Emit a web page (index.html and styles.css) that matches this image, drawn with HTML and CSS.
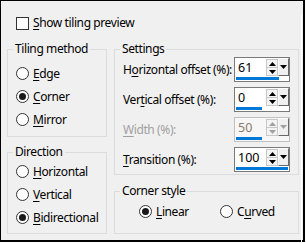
FILE: index.html
```html
<!DOCTYPE html>
<html>
<head>
<meta charset="utf-8">
<link rel="stylesheet" href="styles.css">
</head>
<body>
<div class="win">
  <div class="panel">
    <label class="check"><span class="box"></span><span><u>S</u>how tiling preview</span></label>
    <div class="cols">
      <div class="col left">
        <fieldset class="grp tiling">
          <legend>Tiling method</legend>
          <label class="radio"><span class="dot"></span><span><u>E</u>dge</span></label>
          <label class="radio"><span class="dot on"></span><span><u>C</u>orner</span></label>
          <label class="radio"><span class="dot"></span><span><u>M</u>irror</span></label>
        </fieldset>
        <fieldset class="grp direction">
          <legend>Direction</legend>
          <label class="radio"><span class="dot"></span><span><u>H</u>orizontal</span></label>
          <label class="radio"><span class="dot"></span><span><u>V</u>ertical</span></label>
          <label class="radio"><span class="dot on"></span><span><u>B</u>idirectional</span></label>
        </fieldset>
      </div>
      <div class="col right">
        <fieldset class="grp settings">
          <legend>Settings</legend>
          <div class="row"><span>H<u>o</u>rizontal offset (%):</span>
            <div class="spin"><div class="top"><span class="val">61</span><span class="arrows"><span class="up"><svg width="7" height="4" viewBox="0 0 7 4"><path d="M3.5 0L7 4H0z"/></svg></span><span class="dn"><svg width="7" height="4" viewBox="0 0 7 4"><path d="M0 0H7L3.5 4z"/></svg></span></span><span class="drop"><svg width="7" height="4" viewBox="0 0 7 4"><path d="M0 0H7L3.5 4z"/></svg></span></div><div class="bar" style="width:43px"></div></div>
          </div>
          <div class="row"><span>Ver<u>t</u>ical offset (%):</span>
            <div class="spin"><div class="top"><span class="val">0</span><span class="arrows"><span class="up"><svg width="7" height="4" viewBox="0 0 7 4"><path d="M3.5 0L7 4H0z"/></svg></span><span class="dn"><svg width="7" height="4" viewBox="0 0 7 4"><path d="M0 0H7L3.5 4z"/></svg></span></span><span class="drop"><svg width="7" height="4" viewBox="0 0 7 4"><path d="M0 0H7L3.5 4z"/></svg></span></div><div class="bar" style="width:26px"></div></div>
          </div>
          <div class="row disabled"><span><u>W</u>idth (%):</span>
            <div class="spin"><div class="top"><span class="val">50</span><span class="arrows"><span class="up"><svg width="7" height="4" viewBox="0 0 7 4"><path d="M3.5 0L7 4H0z"/></svg></span><span class="dn"><svg width="7" height="4" viewBox="0 0 7 4"><path d="M0 0H7L3.5 4z"/></svg></span></span><span class="drop"><svg width="7" height="4" viewBox="0 0 7 4"><path d="M0 0H7L3.5 4z"/></svg></span></div><div class="bar" style="width:26px"></div></div>
          </div>
          <div class="row"><span><u>T</u>ransition (%):</span>
            <div class="spin"><div class="top"><span class="val">100</span><span class="arrows"><span class="up"><svg width="7" height="4" viewBox="0 0 7 4"><path d="M3.5 0L7 4H0z"/></svg></span><span class="dn"><svg width="7" height="4" viewBox="0 0 7 4"><path d="M0 0H7L3.5 4z"/></svg></span></span><span class="drop"><svg width="7" height="4" viewBox="0 0 7 4"><path d="M0 0H7L3.5 4z"/></svg></span></div><div class="bar" style="width:52px"></div></div>
          </div>
        </fieldset>
        <fieldset class="grp corner">
          <legend>Corner style</legend>
          <div class="pair">
            <label class="radio"><span class="dot on"></span><span><u>L</u>inear</span></label>
            <label class="radio"><span class="dot"></span><span>C<u>u</u>rved</span></label>
          </div>
        </fieldset>
      </div>
    </div>
  </div>
</div>
</body>
</html>
```

FILE: styles.css
```css
html, body {
  margin: 0;
  padding: 0;
  background: #ffffff;
}
body {
  font-family: "Noto Sans", "Open Sans", sans-serif;
  font-size: 12px;
  letter-spacing: -0.4px;
  color: #000;
  white-space: nowrap;
}
u { text-decoration-thickness: 1px; text-underline-offset: 2px; }
.win {
  width: 302px;
  height: 239px;
  border-style: solid;
  border-color: #000;
  border-width: 1px 2px 2px 1px;
  background: #f0f0f0;
}
.panel {
  width: 300px;
  height: 236px;
  border-right: 1px solid #fff;
  border-bottom: 1px solid #fff;
  box-sizing: content-box;
  padding: 0;
}
.panel > .check {
  margin: 14px 0 0 15px;
}
.check {
  display: flex;
  align-items: center;
  gap: 4px;
  height: 16px;
  line-height: 16px;
}
.check .box {
  width: 11px;
  height: 11px;
  border: 1px solid #333;
  background: #fff;
}
.cols {
  display: flex;
  gap: 7px;
  margin: 10px 0 0 6px;
}
.col {
  display: flex;
  flex-direction: column;
}
.left { width: 100px; gap: 7px; }
.right { width: 185px; gap: 8px; }
.grp {
  margin: 0;
  border: 1px solid #dcdcdc;
  padding: 0 8px;
  min-width: 0;
}
.grp legend {
  padding: 0 2px;
  margin-left: -3px;
  line-height: 16px;
  height: 16px;
}
.radio {
  display: flex;
  align-items: center;
  gap: 4px;
  height: 23px;
  line-height: 16px;
}
.dot {
  width: 11px;
  height: 11px;
  border: 1px solid #333;
  border-radius: 50%;
  background: #fff;
  display: flex;
  align-items: center;
  justify-content: center;
  flex: none;
}
.dot.on::after {
  content: "";
  width: 7px;
  height: 7px;
  border-radius: 50%;
  background: #1a1a1a;
}
.tiling { padding-top: 5px; padding-bottom: 5px; }
.direction { padding-top: 0; padding-bottom: 4px; }
.settings {
  padding-top: 0;
  padding-bottom: 2px;
  display: flex;
  flex-direction: column;
  gap: 5px;
}
.corner { padding-top: 1px; padding-bottom: 10px; }
.row {
  display: flex;
  align-items: center;
  justify-content: space-between;
  height: 25px;
}
.row.disabled { color: #a0a0a0; }
.spin {
  width: 54px;
  height: 23px;
  border: 1px solid #7a7a7a;
  background: #fff;
  display: flex;
  flex-direction: column;
}
.spin .top {
  display: flex;
  height: 18px;
}
.spin .val {
  width: 28px;
  padding-left: 3px;
  line-height: 19px;
  font-size: 12.5px;
  letter-spacing: 0;
}
.arrows {
  width: 12px;
  display: flex;
  flex-direction: column;
  margin-top: 1px;
}
.arrows .up, .arrows .dn {
  height: 7px;
  width: 10px;
  display: flex;
  align-items: center;
  justify-content: center;
  border: 1px solid #c8c8c8;
  background: #f4f4f4;
}
.arrows .dn { border-top: none; }
.arrows svg path, .drop svg path { fill: #000; }
.drop {
  width: 9px;
  height: 16px;
  border-style: solid;
  border-width: 1px;
  border-color: #fff #696969 #696969 #fff;
  background: #f0f0f0;
  display: flex;
  align-items: center;
  justify-content: center;
}
.bar {
  height: 3px;
  margin: 1px 0 0 1px;
  background: #0078d7;
}
.disabled .spin { border-color: #c0c0c0; background: #f7f7f7; }
.disabled .val { color: #8a7a6a; }
.disabled .arrows svg path, .disabled .drop svg path { fill: #a0a0a0; }
.pair {
  display: grid;
  grid-template-columns: 81px auto;
  padding-left: 16px;
}
```
